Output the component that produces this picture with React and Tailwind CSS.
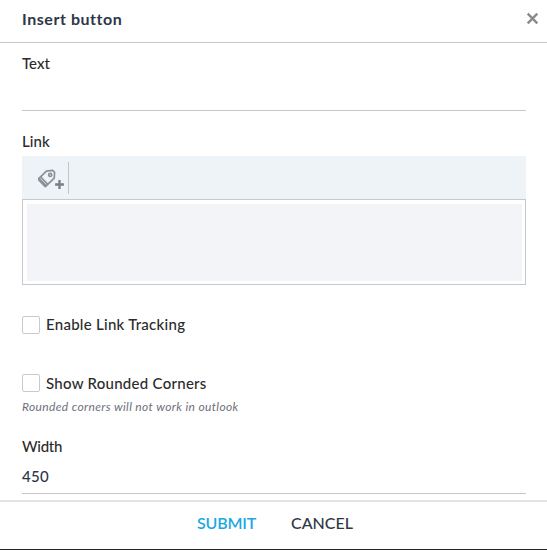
import React from "react";

function TagPlusIcon() {
  return (
    <svg width="28" height="22" viewBox="0 0 28 22" fill="none" stroke="#8b9099" strokeWidth="1.7" strokeLinejoin="round" strokeLinecap="round">
      <path d="M2 11.4 9.4 4.1 15.6 3.4 17.6 5.3 17.2 11.1 9.2 18.9 2 11.4Z" />
      <path d="M3.7 10 10.6 17.1M2 11.4 1.8 13 8.2 19.6 9.2 18.9" />
      <circle cx="13.2" cy="7.9" r="1.5" />
      <path d="M22.5 13.1V21.9M18.1 17.5H26.9" stroke="#787d87" strokeWidth="2.3" strokeLinecap="butt" />
    </svg>
  );
}

function Checkbox({ children }) {
  return (
    <label className="flex h-[18px] items-center gap-[6px]">
      <span className="h-[18px] w-[18px] shrink-0 rounded-[2px] border border-[#c9cacf] bg-white" />
      {children}
    </label>
  );
}

export default function App() {
  return (
    <div className="flex h-[550px] w-[547px] flex-col overflow-hidden border-b border-[#252525] bg-white font-['Lato','Liberation_Sans',sans-serif] text-[15px] font-medium leading-5 whitespace-nowrap text-[#2b2b2b]">
      <header className="flex h-[43px] shrink-0 items-center justify-between border-b border-[#c8c8c8] pr-[8px] pb-[5px] pl-[22px]">
        <h1 className="text-[16px] font-bold tracking-[0.55px] text-[#2e3748]">Insert button</h1>
        <svg width="13" height="13" viewBox="0 0 13 13" stroke="#8a8a8a" strokeWidth="2.4">
          <path d="M1.7 1.7 11.3 11.3M11.3 1.7 1.7 11.3" />
        </svg>
      </header>
      <main className="flex h-[457px] shrink-0 flex-col pr-[21px] pl-[22px] pt-[10px]">
        <div className="h-[58px] border-b border-[#c8c8c8]">Text</div>
        <div className="mt-[20px] h-[25px] tracking-[0.1px]">Link</div>
        <div className="flex h-[43px] items-center bg-[#edf3f7] pl-[15px]">
          <TagPlusIcon />
          <span className="ml-[3px] h-8 w-px bg-[#c2c5ca]" />
        </div>
        <div className="h-[86px] border border-[#c5c8cc] px-[3.5px] pt-1 pb-[3px]">
          <div className="h-full bg-[#f3f4f8]" />
        </div>
        <div className="mt-[31px]">
          <Checkbox><span className="-mt-[2px] tracking-[0.27px]">Enable Link Tracking</span></Checkbox>
        </div>
        <div className="mt-[40px]">
          <Checkbox><span className="tracking-[0.27px]">Show Rounded Corners</span></Checkbox>
        </div>
        <p className="mt-[5px] text-[12px] leading-5 font-normal tracking-[0.36px] text-[#6d707b] italic">Rounded corners will not work in outlook</p>
        <div className="mt-[19px] tracking-[-0.25px]">Width</div>
        <div className="mt-[10px] h-[28px] border-b border-[#c8c8c8] tracking-[0.25px] text-[#2e3748]">450</div>
      </main>
      <footer className="flex h-[49px] shrink-0 justify-center gap-[35px] border-t-2 border-[#e4e4e4] pt-[11px] pl-[3px] text-[16px]">
        <button className="h-5 font-semibold tracking-[-0.2px] text-[#1ba8df]">SUBMIT</button>
        <button className="h-5 font-medium text-[#2e3748]">CANCEL</button>
      </footer>
    </div>
  );
}
